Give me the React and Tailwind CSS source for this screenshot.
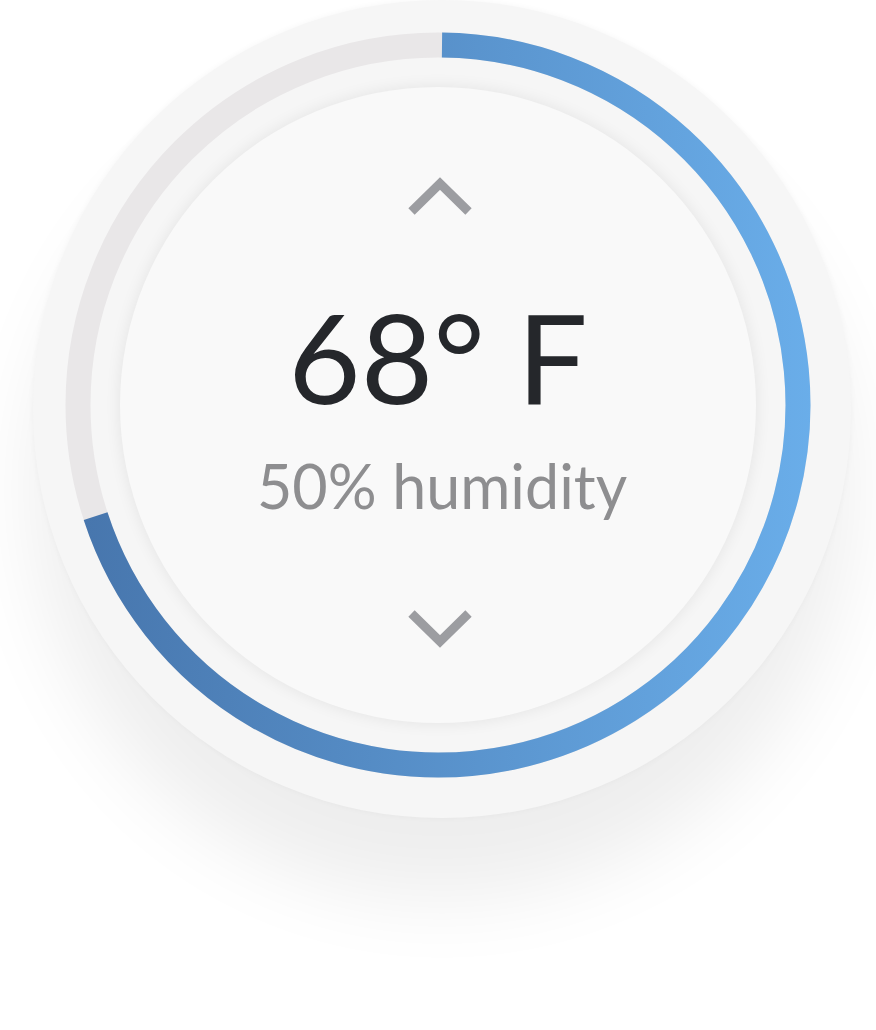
import React from "react";

// Thermostat dial: 70% progress arc, temp + humidity readout
const ARC_PATH = "M 384 20 A 360 360 0 1 1 37.6 491.2";

function Chevron({ down = false }) {
  return (
    <svg width="64" height="38" viewBox="0 0 64 38" className={down ? "rotate-180 ml-[3px]" : "ml-[3px]"}>
      <polyline
        points="3.5,34.5 32,6.5 60.5,34.5"
        fill="none"
        stroke="#9c9da1"
        strokeWidth="9"
        strokeLinejoin="miter"
        strokeLinecap="butt"
      />
    </svg>
  );
}

export default function App() {
  return (
    <div className="w-full h-[1030px] bg-white flex justify-center pl-[8px] overflow-hidden" style={{ fontFamily: "Lato, 'Open Sans', sans-serif" }}>
      <div className="w-[818px] h-[818px] shrink-0 rounded-full bg-[#f6f6f6] flex items-center justify-center shadow-[0_80px_80px_rgba(0,0,0,0.07),0_0_6px_rgba(0,0,0,0.04)]">
        <div className="relative w-[760px] h-[760px] mr-[8px] mb-[8px] flex items-center justify-center">
          <svg width="760" height="760" viewBox="0 0 760 760" className="absolute inset-0">
            <defs>
              <linearGradient id="arc" x1="0" y1="0" x2="760" y2="0" gradientUnits="userSpaceOnUse">
                <stop offset="0" stopColor="#4674ab" />
                <stop offset="1" stopColor="#6aaeea" />
              </linearGradient>
            </defs>
            <circle cx="380" cy="380" r="360" fill="none" stroke="#e9e7e8" strokeWidth="25" />
            <path d={ARC_PATH} fill="none" stroke="url(#arc)" strokeWidth="25" />
          </svg>
          <div className="relative w-[636px] h-[636px] rounded-full bg-[#f9f9f9] shadow-[0_0_16px_rgba(0,0,0,0.08)] flex flex-col items-center pt-[90px]">
            <Chevron />
            <div className="mt-[79px] text-[125px] leading-[125px] text-[#25272b] whitespace-nowrap">68° F</div>
            <div className="mt-[37px] ml-[8px] text-[61px] leading-[60px] text-[#8e8e90] whitespace-nowrap">50% humidity</div>
            <div className="mt-[94px]">
              <Chevron down />
            </div>
          </div>
        </div>
      </div>
    </div>
  );
}
